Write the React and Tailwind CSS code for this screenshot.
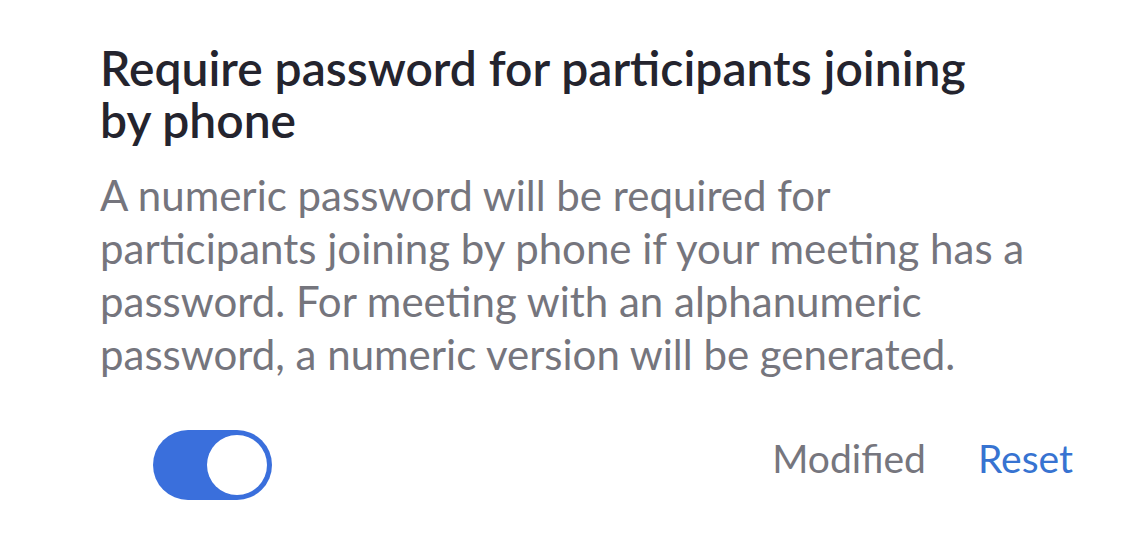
export default function App() {
  return (
    <div className="w-[1125px] h-[535px] bg-white font-['Lato',sans-serif] pl-[100px] pr-[52px] pt-[42px]">
      <h1 className="text-[48px] leading-[52px] font-semibold text-[#24242e]">
        Require password for participants joining
        <br />
        by phone
      </h1>
      <p className="mt-[23px] text-[42px] leading-[53px] text-[#75757d]">
        A numeric password will be required for
        <br />
        participants joining by phone if your meeting has a
        <br />
        password. For meeting with an alphanumeric
        <br />
        password, a numeric version will be generated.
      </p>
      <div className="mt-[48px] flex items-center justify-between">
        <div className="ml-[53px] w-[119px] h-[70px] rounded-full bg-[#3a6fdc] p-[5px] flex justify-end">
          <div className="w-[60px] h-[60px] rounded-full bg-white" />
        </div>
        <div className="flex items-center gap-[52px] text-[39px] pb-[14px]">
          <span className="text-[#76767e]">Modified</span>
          <span className="text-[#3773d1]">Reset</span>
        </div>
      </div>
    </div>
  );
}
